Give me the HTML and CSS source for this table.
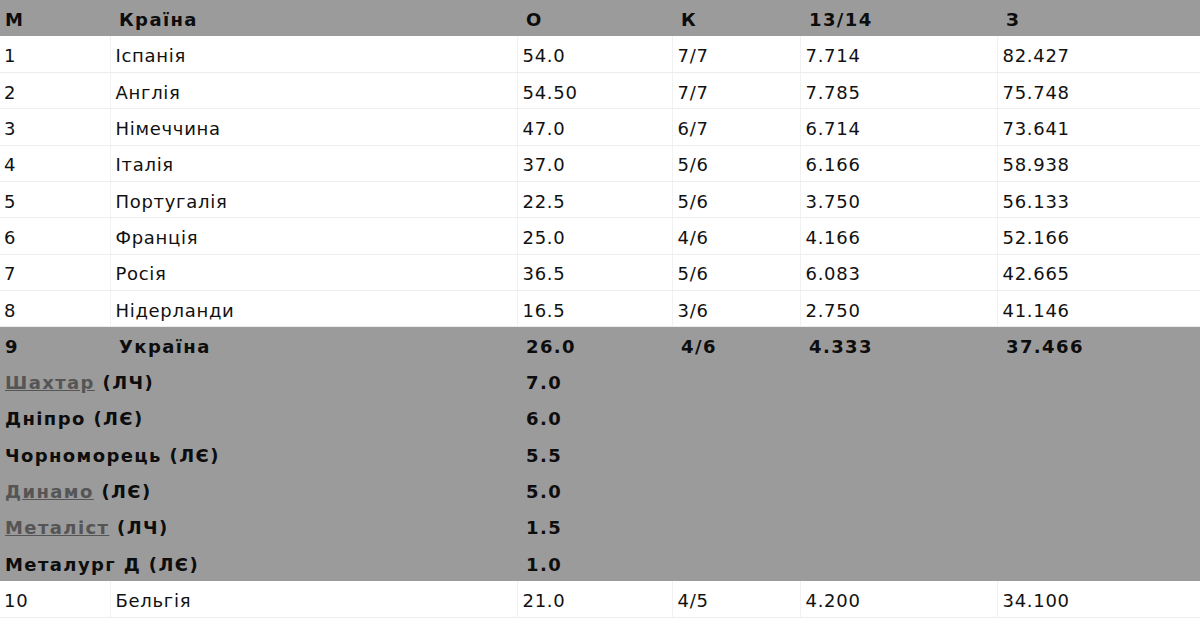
FILE: index.html
```html
<!DOCTYPE html>
<html lang="uk">
<head>
<meta charset="utf-8">
<title>Таблиця коефіцієнтів</title>
<link rel="stylesheet" href="styles.css">
</head>
<body>
<table class="rank">
  <colgroup>
    <col class="c1"><col class="c2"><col class="c3"><col class="c4"><col class="c5"><col class="c6">
  </colgroup>
  <thead>
    <tr class="head"><th>М</th><th class="ind">Країна</th><th>О</th><th>К</th><th>13/14</th><th>З</th></tr>
  </thead>
  <tbody>
    <tr class="row"><td>1</td><td>Іспанія</td><td>54.0</td><td>7/7</td><td>7.714</td><td>82.427</td></tr>
    <tr class="row"><td>2</td><td>Англія</td><td>54.50</td><td>7/7</td><td>7.785</td><td>75.748</td></tr>
    <tr class="row"><td>3</td><td>Німеччина</td><td>47.0</td><td>6/7</td><td>6.714</td><td>73.641</td></tr>
    <tr class="row"><td>4</td><td>Італія</td><td>37.0</td><td>5/6</td><td>6.166</td><td>58.938</td></tr>
    <tr class="row"><td>5</td><td>Португалія</td><td>22.5</td><td>5/6</td><td>3.750</td><td>56.133</td></tr>
    <tr class="row"><td>6</td><td>Франція</td><td>25.0</td><td>4/6</td><td>4.166</td><td>52.166</td></tr>
    <tr class="row"><td>7</td><td>Росія</td><td>36.5</td><td>5/6</td><td>6.083</td><td>42.665</td></tr>
    <tr class="row"><td>8</td><td>Нідерланди</td><td>16.5</td><td>3/6</td><td>2.750</td><td>41.146</td></tr>
    <tr class="hl"><td>9</td><td class="ind">Україна</td><td>26.0</td><td>4/6</td><td>4.333</td><td>37.466</td></tr>
    <tr class="hl"><td colspan="2"><a href="#">Шахтар</a> (ЛЧ)</td><td>7.0</td><td></td><td></td><td></td></tr>
    <tr class="hl"><td colspan="2">Дніпро (ЛЄ)</td><td>6.0</td><td></td><td></td><td></td></tr>
    <tr class="hl"><td colspan="2">Чорноморець (ЛЄ)</td><td>5.5</td><td></td><td></td><td></td></tr>
    <tr class="hl"><td colspan="2"><a href="#">Динамо</a> (ЛЄ)</td><td>5.0</td><td></td><td></td><td></td></tr>
    <tr class="hl"><td colspan="2"><a href="#">Металіст</a> (ЛЧ)</td><td>1.5</td><td></td><td></td><td></td></tr>
    <tr class="hl"><td colspan="2">Металург Д (ЛЄ)</td><td>1.0</td><td></td><td></td><td></td></tr>
    <tr class="row"><td>10</td><td>Бельгія</td><td>21.0</td><td>4/5</td><td>4.200</td><td>34.100</td></tr>
  </tbody>
</table>
</body>
</html>
```
FILE: styles.css
```css
html, body {
  margin: 0;
  padding: 0;
  background: #ffffff;
}
.rank {
  width: 1200px;
  border-collapse: collapse;
  table-layout: fixed;
  font-family: "DejaVu Sans", Verdana, sans-serif;
  font-size: 18px;
  letter-spacing: 0.7px;
  color: #111;
}
.c1 { width: 110px; }
.c2 { width: 407px; }
.c3 { width: 155px; }
.c4 { width: 128px; }
.c5 { width: 197px; }
.c6 { width: 203px; }
.rank th, .rank td {
  height: 36.3px;
  padding: 3px 6px 0;
  text-align: left;
  white-space: nowrap;
  box-sizing: border-box;
}
.head {
  background: #9b9b9b;
}
.head th {
  font-weight: bold;
  letter-spacing: 1.4px;
  color: #0d0d0d;
  padding-left: 9px;
}
.head th:first-child { padding-left: 5px; }
.row td {
  border-bottom: 1px solid #ededed;
  border-left: 1px solid #f1f1f1;
  padding-left: 5px;
}
.row td:first-child {
  border-left: none;
  padding-left: 4px;
}
.hl {
  background: #9b9b9b;
}
.hl td {
  font-weight: bold;
  letter-spacing: 1.4px;
  color: #0d0d0d;
  padding-left: 9px;
}
.hl td:first-child { padding-left: 5px; }
.hl a {
  color: #555555;
  text-decoration: underline;
}
```
